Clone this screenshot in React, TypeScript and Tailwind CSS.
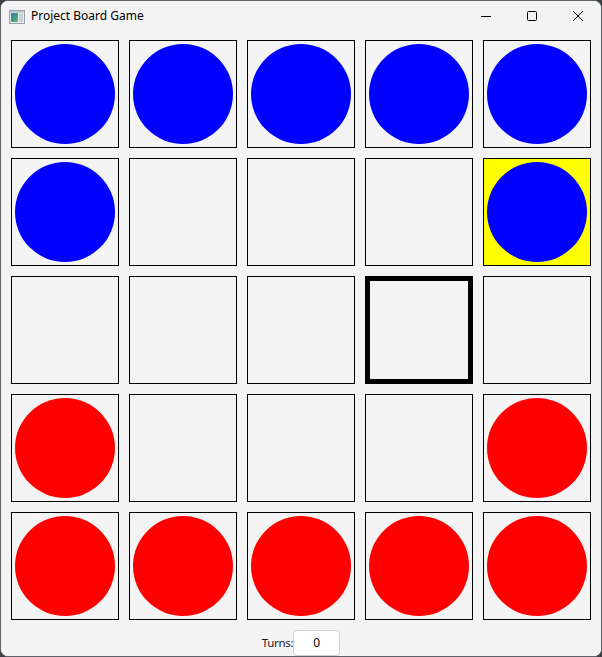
import React, { useState } from "react";

type Piece = "blue" | "red" | null;

const initialBoard: Piece[][] = [
  ["blue", "blue", "blue", "blue", "blue"],
  ["blue", null, null, null, "blue"],
  [null, null, null, null, null],
  ["red", null, null, null, "red"],
  ["red", "red", "red", "red", "red"],
];

function AppIcon() {
  return (
    <svg width="16" height="14" viewBox="0 0 16 14">
      <rect x="0.5" y="0.5" width="15" height="13" fill="#e8eaec" stroke="#9aa3ab" />
      <rect x="2" y="3" width="7" height="9" fill="url(#g)" />
      <rect x="10" y="3" width="4" height="9" fill="#c9d2d8" />
      <rect x="1" y="1" width="14" height="1.5" fill="#b8c3cc" />
      <defs>
        <linearGradient id="g" x1="0" y1="0" x2="1" y2="1">
          <stop offset="0" stopColor="#3b7bc4" />
          <stop offset="0.6" stopColor="#3aa37a" />
          <stop offset="1" stopColor="#7cc36a" />
        </linearGradient>
      </defs>
    </svg>
  );
}

function TitleBar() {
  return (
    <div className="flex h-[31px] items-center bg-[#f3f3f3]">
      <div className="ml-[8px] mt-[1px] flex items-center">
        <AppIcon />
      </div>
      <span className="ml-[6px] text-[12px] text-black" style={{ fontFamily: '"Noto Sans", "Liberation Sans", sans-serif' }}>
        Project Board Game
      </span>
      <div className="ml-auto flex h-full">
        <button className="flex h-full w-[46px] items-center justify-center">
          <svg width="10" height="10" viewBox="0 0 10 10">
            <path d="M0 5.5h10" stroke="#000" strokeWidth="1" />
          </svg>
        </button>
        <button className="flex h-full w-[46px] items-center justify-center">
          <svg width="10" height="10" viewBox="0 0 10 10">
            <rect x="0.5" y="0.5" width="9" height="9" rx="1" fill="none" stroke="#000" strokeWidth="1" />
          </svg>
        </button>
        <button className="flex h-full w-[46px] items-center justify-center">
          <svg width="10" height="10" viewBox="0 0 10 10">
            <path d="M0 0L10 10M10 0L0 10" stroke="#000" strokeWidth="1" />
          </svg>
        </button>
      </div>
    </div>
  );
}

function Cell({ piece, selected, target }: { piece: Piece; selected: boolean; target: boolean }) {
  const border = target ? "border-[5px] border-black" : "border border-black";
  const bg = selected ? "bg-[#ffff00]" : "bg-[#f4f4f4]";
  return (
    <div className={`flex h-[108px] w-[108px] items-center justify-center ${border} ${bg}`}>
      {piece === "blue" && <div className="h-[100px] w-[100px] rounded-full bg-[#0000ff]" />}
      {piece === "red" && <div className="h-[100px] w-[100px] rounded-full bg-[#ff0000]" />}
    </div>
  );
}

export default function App() {
  const [board] = useState(initialBoard);
  const [turns] = useState(0);

  return (
    <div className="h-[657px] w-[602px] bg-[#3c4046]">
      <div className="flex h-full w-full flex-col overflow-hidden rounded-[8px] border border-[#5c6067] bg-[#f3f3f3]">
        <TitleBar />
        <div className="flex-1 bg-[#f4f4f4] px-[10px] pt-[9px]">
          <div className="grid grid-cols-[repeat(5,108px)] gap-[10px]">
            {board.map((row, r) =>
              row.map((piece, c) => (
                <Cell key={`${r}-${c}`} piece={piece} selected={r === 1 && c === 4} target={r === 2 && c === 3} />
              ))
            )}
          </div>
          <div
            className="mt-[10px] flex items-center justify-center text-[12px] text-black"
            style={{ fontFamily: '"Noto Sans", "Liberation Sans", sans-serif' }}
          >
            <span className="whitespace-nowrap text-[11.5px] tracking-[-0.3px] text-[#1a1a1a]">Turns:</span>
            <div className="flex h-[26px] w-[47px] items-center justify-center rounded-[4px] border border-[#d0d0d0] bg-white">
              {turns}
            </div>
          </div>
        </div>
      </div>
    </div>
  );
}
